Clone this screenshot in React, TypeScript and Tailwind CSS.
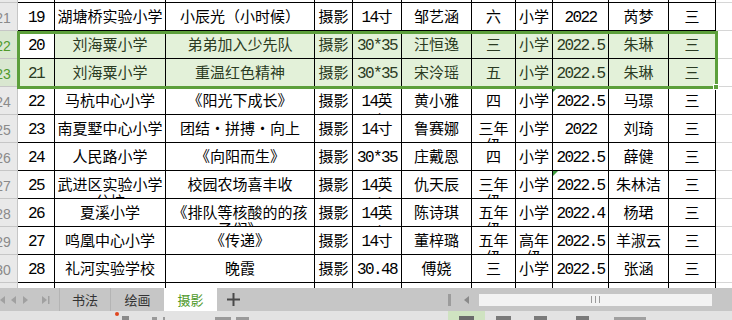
import React from "react";

const widths = [37, 111, 149, 38, 49, 70, 44, 37, 56, 60, 47];

type Row = { hdr: string; cells: string[]; sel?: boolean; marks?: number[] };

const rows: Row[] = [
  { hdr: "20", cells: ["18", "湖塘桥实验小学", "《我的校园》", "摄影", "14寸", "王子涵", "六", "小学", "2022", "芮梦", "三"] },
  { hdr: "21", cells: ["19", "湖塘桥实验小学", "小辰光（小时候）", "摄影", "14寸", "邹艺涵", "六", "小学", "2022", "芮梦", "三"] },
  { hdr: "22", sel: true, cells: ["20", "刘海粟小学", "弟弟加入少先队", "摄影", "30*35", "汪恒逸", "三", "小学", "2022.5", "朱琳", "三"] },
  { hdr: "23", sel: true, cells: ["21", "刘海粟小学", "重温红色精神", "摄影", "30*35", "宋泠瑶", "五", "小学", "2022.5", "朱琳", "三"] },
  { hdr: "24", marks: [8], cells: ["22", "马杭中心小学", "《阳光下成长》", "摄影", "14英寸", "黄小雅", "四", "小学", "2022.5", "马璟", "三"] },
  { hdr: "25", cells: ["23", "南夏墅中心小学", "团结・拼搏・向上", "摄影", "14寸", "鲁赛娜", "三年级", "小学", "2022", "刘琦", "三"] },
  { hdr: "26", cells: ["24", "人民路小学", "《向阳而生》", "摄影", "30*35cm", "庄戴恩", "四", "小学", "2022.5", "薛健", "三"] },
  { hdr: "27", marks: [8], cells: ["25", "武进区实验小学分校", "校园农场喜丰收", "摄影", "14英寸", "仇天辰", "三年级", "小学", "2022.5", "朱林洁", "三"] },
  { hdr: "28", cells: ["26", "夏溪小学", "《排队等核酸的的孩子们》", "摄影", "14英寸", "陈诗琪", "五年级", "小学", "2022.4", "杨珺", "三"] },
  { hdr: "29", cells: ["27", "鸣凰中心小学", "《传递》", "摄影", "14寸", "董梓璐", "五年级", "高年级", "2022.5.17", "羊淑云", "三"] },
  { hdr: "30", cells: ["28", "礼河实验学校", "晚霞", "摄影", "30.48*25.6", "傅娆", "三", "小学", "2022.5", "张涵", "三"] },
  { hdr: "31", cells: ["29", "洛阳中心小学", "读书让心灵更美好", "摄影", "14寸", "许可馨", "五", "小学", "2022.5", "刘雯", "三"] },
];

// ascii runs get the narrow mono digits, the rest stays in the CJK face
function rich(s: string) {
  return s.split(/([\x21-\x7e]+)/).map((p, i) =>
    /^[\x21-\x7e]+$/.test(p) ? (
      <span key={i} className="font-['Liberation_Mono'] text-[16px] tracking-[-1.6px]">
        {p}
      </span>
    ) : (
      p
    )
  );
}

function SheetRow({ row }: { row: Row }) {
  return (
    <div className="flex h-[28px]">
      <div
        className={
          "w-[18px] shrink-0 overflow-hidden border-r border-b border-[#c6c6c6] " +
          (row.sel ? "bg-[#d9e7d0] text-[#4f9a2c]" : "bg-[#e9e9e9] text-[#8a8a8a]")
        }
      >
        <div className="ml-[-12px] w-[30px] pt-[3px] text-center font-['Liberation_Sans'] text-[14px] leading-[24px]">
          {row.hdr}
        </div>
      </div>
      {row.cells.map((c, i) => {
        const active = row.sel && row.hdr === "22" && i === 0;
        return (
          <div
            key={i}
            style={{ width: widths[i] }}
            className={
              "relative shrink-0 overflow-hidden break-all [line-break:anywhere] border-r border-b border-black px-[2px] pt-[4px] text-center text-[15px] leading-[17px] " +
              (row.sel && !active ? "bg-[#e3f1d9] text-[#2b3b23]" : "bg-white text-black")
            }
          >
            {rich(c)}
            {row.marks?.includes(i) && (
              <div className="absolute left-0 top-0 h-0 w-0 border-t-[5px] border-r-[5px] border-t-[#3f9b3f] border-r-transparent" />
            )}
          </div>
        );
      })}
      <div className="flex-1 border-b border-[#d6d6d6] bg-white" />
    </div>
  );
}

function NavArrows() {
  return (
    <svg width="59" height="23" viewBox="0 0 59 23" className="shrink-0">
      <rect x="-2" y="8" width="1.5" height="8" fill="#a0a0a0" />
      <polygon points="5,8 5,16 0,12" fill="#a0a0a0" />
      <polygon points="16,8 16,16 11,12" fill="#a0a0a0" />
      <polygon points="23,8 23,16 28,12" fill="#a0a0a0" />
      <polygon points="42,8 42,16 47,12" fill="#a0a0a0" />
      <rect x="48" y="8" width="1.5" height="8" fill="#a0a0a0" />
    </svg>
  );
}

export default function App() {
  return (
    <div className="flex h-[320px] w-[732px] flex-col overflow-hidden bg-white font-['Noto_Sans_CJK_SC',sans-serif]">
      <div className="relative h-[288px] shrink-0 overflow-hidden">
        <div className="mt-[-25px]">
          {rows.map((r) => (
            <SheetRow key={r.hdr} row={r} />
          ))}
        </div>
        <div className="pointer-events-none absolute left-[17px] top-[31px] h-[58px] w-[701px] border-[3px] border-[#5c9f3b]" />
        <div className="absolute left-[713px] top-[84px] h-[6px] w-[6px] border border-white bg-[#5c9f3b]" />
      </div>

      <div className="flex h-[23px] shrink-0 items-stretch bg-[#c6c6c6] text-[13px] text-[#333]">
        <NavArrows />
        <div className="w-px bg-[#b4b4b4]" />
        <div className="flex w-[51px] items-center justify-center border-r border-[#b4b4b4]">书法</div>
        <div className="flex w-[53px] items-center justify-center">绘画</div>
        <div className="flex w-[53px] items-center justify-center bg-white text-[#4f9a2b]">摄影</div>
        <div className="flex w-[32px] items-center justify-center">
          <svg width="13" height="13" viewBox="0 0 13 13">
            <rect x="0" y="5.5" width="13" height="2" fill="#4a4a4a" />
            <rect x="5.5" y="0" width="2" height="13" fill="#4a4a4a" />
          </svg>
        </div>
        <div className="w-[199px]" />
        <div className="flex items-center">
          <div className="h-[12px] w-[3px] bg-[#9c9c9c]" />
          <svg width="28" height="12" viewBox="0 0 28 12">
            <polygon points="18,2 18,10 13,6" fill="#8a8a8a" />
          </svg>
          <div className="flex h-[12px] w-[233px] items-center justify-center gap-[3px] bg-[#f3f3f3]">
            <div className="h-[7px] w-px bg-[#9a9a9a]" />
            <div className="h-[7px] w-px bg-[#9a9a9a]" />
            <div className="h-[7px] w-px bg-[#9a9a9a]" />
          </div>
        </div>
      </div>

      <div className="flex h-[9px] shrink-0 items-start bg-[#e3e3e3]">
        <div className="w-[115px]" />
        <div className="mt-[1px] h-[4px] w-[4px] rounded-full bg-[#e0461f]" />
        <div className="w-[3px]" />
        <div className="mt-[5px] h-[4px] w-[7px] bg-[#8a8a8a]" />
        <div className="w-[23px]" />
        <div className="mt-[6px] h-[3px] w-[5px] bg-[#9a9a9a]" />
        <div className="w-[6px]" />
        <div className="mt-[6px] h-[3px] w-[2px] bg-[#9a9a9a]" />
        <div className="w-[50px]" />
        <div className="mt-[6px] h-[3px] w-[16px] bg-[#9a9a9a]" />
        <div className="w-[5px]" />
        <div className="mt-[6px] h-[3px] w-[13px] bg-[#9a9a9a]" />
        <div className="w-[199px]" />
        <div className="flex h-[9px] w-[37px] items-start justify-center bg-[#cfe3c1] pt-[5px]">
          <div className="h-[4px] w-[15px] bg-[#6a6a6a]" />
        </div>
        <div className="w-[11px]" />
        <div className="mt-[5px] h-[4px] w-[15px] bg-[#7a7a7a]" />
        <div className="w-[23px]" />
        <div className="mt-[5px] h-[4px] w-[13px] bg-[#7a7a7a]" />
        <div className="w-[29px]" />
        <div className="mt-[5px] h-[4px] w-[13px] bg-[#7a7a7a]" />
        <div className="w-[25px]" />
        <div className="mt-[6px] h-[3px] w-[32px] bg-[#a0a0a0]" />
      </div>
    </div>
  );
}
